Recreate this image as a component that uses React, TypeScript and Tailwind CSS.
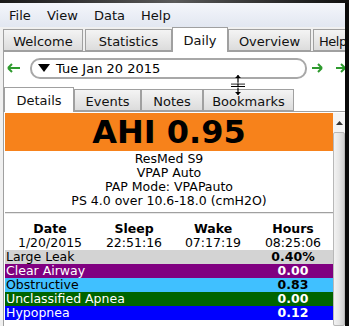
import React from "react";

const Tab = ({ label, w, selected }: { label: string; w: number; selected?: boolean }) => (
  <div
    style={{ width: w }}
    className={
      selected
        ? "shrink-0 h-[25px] flex items-center justify-center bg-white border border-b-0 border-[#a0a0a0] relative z-10 -mb-px"
        : "shrink-0 h-[22px] flex items-center justify-center pt-[2px] bg-gradient-to-b from-[#f4f4f4] to-[#dcdcdc] border border-[#a0a0a0]"
    }
  >
    <span className="text-[13px] leading-none text-[#111]">{label}</span>
  </div>
);

const rows = [
  { label: "Large Leak", value: "0.40%", bg: "bg-[#d3d3d3]", fg: "text-black" },
  { label: "Clear Airway", value: "0.00", bg: "bg-[#800080]", fg: "text-white" },
  { label: "Obstructive", value: "0.83", bg: "bg-[#40c0ff]", fg: "text-black" },
  { label: "Unclassified Apnea", value: "0.00", bg: "bg-[#006400]", fg: "text-white" },
  { label: "Hypopnea", value: "0.12", bg: "bg-[#0000ff]", fg: "text-white" },
];

export default function App() {
  return (
    <div className="relative w-[349px] h-[326px] overflow-hidden bg-[#f0f0f0] font-['DejaVu_Sans',sans-serif] text-black">
      <div className="h-[3px] bg-gradient-to-r from-[#1a1a1a] via-[#5a5a5a] to-[#101010]" />
      <div className="flex h-[323px]">
        <div className="flex-1 min-w-0 flex flex-col overflow-hidden">
          {/* menu */}
          <div className="h-[24px] shrink-0 flex items-center pl-[9px] pt-[2px] bg-gradient-to-b from-[#f4f6fb] to-[#e2e7f1] text-[13px] text-[#111]">
            <span className="w-[38px]">File</span>
            <span className="w-[47px]">View</span>
            <span className="w-[47px]">Data</span>
            <span>Help</span>
          </div>
          {/* tabs */}
          <div className="h-[24px] shrink-0 flex items-end pl-[3px] overflow-visible">
            <Tab label="Welcome" w={80} />
            <div className="w-[2px] shrink-0" />
            <Tab label="Statistics" w={87} />
            <Tab label="Daily" w={56} selected />
            <Tab label="Overview" w={83} />
            <div className="w-[2px] shrink-0" />
            <div className="shrink-0 w-[50px] h-[22px] pl-[5px] pt-[2px] flex items-center bg-gradient-to-b from-[#f4f4f4] to-[#dcdcdc] border border-[#a0a0a0]">
              <span className="text-[13px] leading-none text-[#111] tracking-[-0.5px]">Help</span>
            </div>
          </div>
          {/* content */}
          <div className="flex-1 min-h-0 ml-[3px] border-l border-t border-[#a0a0a0] bg-white flex flex-col overflow-hidden">
            {/* date row */}
            <div className="h-[28px] mt-[2px] shrink-0 flex items-center">
              <svg width="14" height="10" viewBox="0 0 14 10" className="ml-[3px] shrink-0">
                <path d="M1 5 H13 M1 5 L5 1 M1 5 L5 9" stroke="#2e9a2e" strokeWidth="2" fill="none" />
              </svg>
              <div className="ml-[9px] shrink-0 w-[277px] h-[21px] border-2 border-[#a8a8a8] rounded-[10px] flex items-center pl-[6px]">
                <svg width="12" height="8" viewBox="0 0 12 8">
                  <path d="M0 0 H12 L6 8 Z" fill="#000" />
                </svg>
                <span className="ml-[6px] text-[13px] leading-none">Tue Jan 20 2015</span>
              </div>
              <svg width="11" height="10" viewBox="0 0 11 10" className="ml-[5px] shrink-0">
                <path d="M0 5 H10 M10 5 L6 1 M10 5 L6 9" stroke="#2e9a2e" strokeWidth="2" fill="none" />
              </svg>
              <svg width="14" height="12" viewBox="0 0 14 12" className="ml-[13px] shrink-0">
                <path d="M0 6 H9 M9 6 L5 2 M9 6 L5 10" stroke="#2e9a2e" strokeWidth="2" fill="none" />
                <path d="M11 0 V12" stroke="#2e9a2e" strokeWidth="2" />
              </svg>
            </div>
            {/* inner tabs */}
            <div className="h-[22px] mt-[7px] shrink-0 flex items-end">
              <Tab label="Details" w={70} selected />
              <Tab label="Events" w={67} />
              <Tab label="Notes" w={62} />
              <Tab label="Bookmarks" w={91} />
            </div>
            {/* details panel */}
            <div className="flex-1 min-h-0 flex border-t border-[#a0a0a0] pt-px">
              <div className="flex-1 min-w-0 pl-px">
                <div className="h-[38px] bg-[#f7821b] flex items-center justify-center">
                  <span className="text-[32px] font-bold leading-none">AHI 0.95</span>
                </div>
                <div className="flex flex-col items-center text-[12.5px] leading-[14px] pt-[1px]">
                  <span>ResMed S9</span>
                  <span>VPAP Auto</span>
                  <span>PAP Mode: VPAPauto</span>
                  <span>PS 4.0 over 10.6-18.0 (cmH2O)</span>
                </div>
                <div className="mt-[4px] h-[2px] border-t border-[#a0a0a0] bg-[#e8e8e8]" />
                <div className="mt-[8px] grid grid-cols-[90px_78px_80px_80px] text-[12.5px] leading-[14px] text-center">
                  <span className="font-bold">Date</span>
                  <span className="font-bold">Sleep</span>
                  <span className="font-bold">Wake</span>
                  <span className="font-bold">Hours</span>
                  <span>1/20/2015</span>
                  <span>22:51:16</span>
                  <span>07:17:19</span>
                  <span>08:25:06</span>
                </div>
                <div>
                  {rows.map((r) => (
                    <div key={r.label} className={`h-[14px] flex items-center ${r.bg} ${r.fg} text-[12.5px] leading-none`}>
                      <span className="pl-[1px] flex-1">{r.label}</span>
                      <span className="w-[80px] text-center font-bold">{r.value}</span>
                    </div>
                  ))}
                </div>
              </div>
              {/* scrollbar */}
              <div className="w-[12px] shrink-0 flex flex-col bg-[#f4f4f4]">
                <div className="h-[19px] flex items-center justify-center">
                  <svg width="7" height="4" viewBox="0 0 7 4">
                    <path d="M0 4 L3.5 0 L7 4 Z" fill="#333" />
                  </svg>
                </div>
                <div className="flex-1 border border-[#b8b8b8] rounded-[2px] bg-gradient-to-r from-[#f2f2f2] via-[#e6e6e6] to-[#cfcfcf]" />
              </div>
            </div>
          </div>
        </div>
        <div className="w-[4px] shrink-0 bg-[#0a0a0a]" />
      </div>
      {/* resize cursor */}
      <svg width="16" height="22" viewBox="0 0 16 22" className="absolute left-[230px] top-[74px]">
        <path d="M8 1 V21" stroke="#000" strokeWidth="1.2" />
        <path d="M5 4 L8 1 L11 4 Z M5 18 L8 21 L11 18 Z" fill="#000" />
        <path d="M1 10 H15 M1 12.5 H15" stroke="#000" strokeWidth="1.2" />
        <path d="M1 9 H15 M1 13.5 H15" stroke="#fff" strokeWidth="0.6" />
      </svg>
    </div>
  );
}
